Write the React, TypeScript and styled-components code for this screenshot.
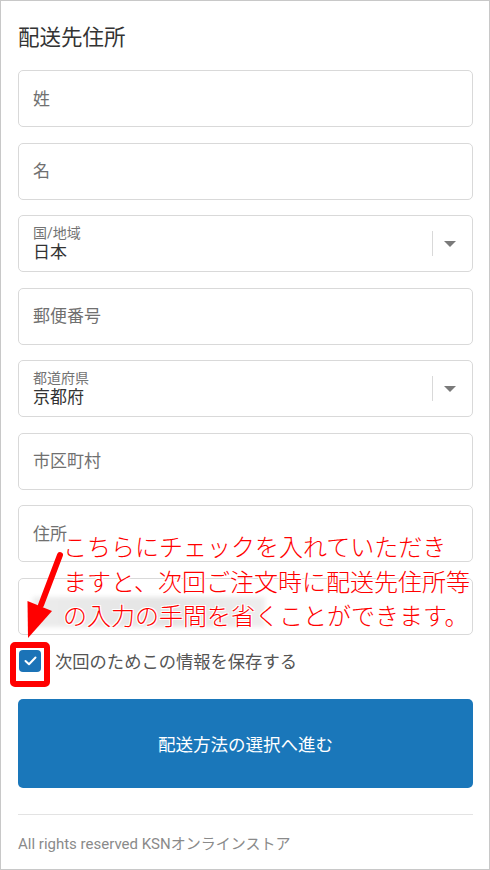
import React from "react";
import styled, { createGlobalStyle } from "styled-components";

const Global = createGlobalStyle`
  html, body { margin: 0; padding: 0; background: #fff; overflow: hidden; }
  * { box-sizing: border-box; }
  body { font-family: Roboto, "Noto Sans CJK JP", sans-serif; }
`;

const Frame = styled.div`
  position: relative;
  width: 490px;
  height: 870px;
  border: 1px solid #c8c8c8;
  padding: 23px 16px 0 17px;
  overflow: hidden;
`;

const Title = styled.h2`
  margin: 0 0 18px;
  font-size: 21.5px;
  line-height: 28px;
  font-weight: 400;
  color: #333;
`;

const Fields = styled.div`
  display: flex;
  flex-direction: column;
  gap: 15.5px;
`;

const Field = styled.div`
  position: relative;
  height: 57px;
  border: 1px solid #d9d9d9;
  border-radius: 5px;
  display: flex;
  align-items: center;
  padding: 0 14px;
  background: #fff;
`;

const Placeholder = styled.span`
  font-size: 17px;
  color: #707070;
  line-height: 20px;
`;

const SelectBody = styled.div`
  flex: 1;
  display: flex;
  flex-direction: column;
  justify-content: center;
`;

const SelectLabel = styled.span`
  font-size: 14px;
  line-height: 16px;
  color: #737373;
`;

const SelectValue = styled.span`
  font-size: 17px;
  line-height: 22px;
  color: #333;
`;

const SelectDivider = styled.span`
  width: 1px;
  height: 25px;
  background: #d9d9d9;
  margin-right: 11px;
`;

const Caret = styled.span`
  width: 0;
  height: 0;
  border-left: 6px solid transparent;
  border-right: 6px solid transparent;
  border-top: 6px solid #7a7a7a;
  margin-right: 2px;
`;

const BlurredHint = styled.div`
  width: 232px;
  height: 30px;
  margin-top: 11px;
  background: linear-gradient(90deg, #ececec, #e4e4e4 60%, #eeeeee);
  filter: blur(2px);
`;

const CheckRow = styled.label`
  display: flex;
  align-items: center;
  gap: 14px;
  margin-top: 15px;
  height: 22px;
  padding-left: 1px;
`;

const CheckBox = styled.span`
  width: 22px;
  height: 22px;
  border-radius: 4px;
  background: #1b73b7;
  display: flex;
  align-items: center;
  justify-content: center;
`;

const CheckText = styled.span`
  font-size: 17.3px;
  color: #555;
`;

const PrimaryButton = styled.button`
  display: block;
  width: 100%;
  height: 89px;
  margin-top: 27px;
  border: none;
  border-radius: 5px;
  background: #1a77ba;
  color: #fff;
  font-family: Roboto, "Noto Sans CJK JP", sans-serif;
  font-size: 17.5px;
`;

const Divider = styled.hr`
  margin: 26px 0 0;
  border: none;
  border-top: 1px solid #e3e3e3;
`;

const Footer = styled.p`
  margin: 19px 0 0;
  font-size: 15px;
  line-height: 20px;
  color: #8a8a8a;
`;

const Overlay = styled.svg`
  position: absolute;
  left: 0;
  top: 0;
  pointer-events: none;
`;

const Note = styled.div`
  position: absolute;
  left: 62px;
  top: 528px;
  font-family: "Noto Sans CJK JP", sans-serif;
  font-size: 24px;
  font-weight: 300;
  line-height: 34.5px;
  color: #ff0000;
  white-space: nowrap;
  text-shadow: 1px 1px 0 #fff, -1px -1px 0 #fff, 1px -1px 0 #fff, -1px 1px 0 #fff;
`;

export default function App() {
  return (
    <>
      <Global />
      <Frame>
        <Title>配送先住所</Title>
        <Fields>
          <Field><Placeholder>姓</Placeholder></Field>
          <Field><Placeholder>名</Placeholder></Field>
          <Field>
            <SelectBody>
              <SelectLabel>国/地域</SelectLabel>
              <SelectValue>日本</SelectValue>
            </SelectBody>
            <SelectDivider />
            <Caret />
          </Field>
          <Field><Placeholder>郵便番号</Placeholder></Field>
          <Field>
            <SelectBody>
              <SelectLabel>都道府県</SelectLabel>
              <SelectValue>京都府</SelectValue>
            </SelectBody>
            <SelectDivider />
            <Caret />
          </Field>
          <Field><Placeholder>市区町村</Placeholder></Field>
          <Field><Placeholder>住所</Placeholder></Field>
          <Field><BlurredHint /></Field>
        </Fields>
        <CheckRow>
          <CheckBox>
            <svg width="13" height="10" viewBox="0 0 13 10">
              <path d="M1.5 5 L5 8.2 L11.5 1.5" fill="none" stroke="#fff" strokeWidth="2" strokeLinecap="round" strokeLinejoin="round" />
            </svg>
          </CheckBox>
          <CheckText>次回のためこの情報を保存する</CheckText>
        </CheckRow>
        <PrimaryButton>配送方法の選択へ進む</PrimaryButton>
        <Divider />
        <Footer>All rights reserved KSNオンラインストア</Footer>

        <Note>
          こちらにチェックを入れていただき<br />
          ますと、次回ご注文時に配送先住所等<br />
          の入力の手間を省くことができます。
        </Note>
        <Overlay width="490" height="870" viewBox="0 0 490 870">
          <line x1="59" y1="554" x2="40" y2="604" stroke="#ff0000" strokeWidth="6" strokeLinecap="round" />
          <polygon points="27,637 26.5,600 51,610" fill="#ff0000" />
          <rect x="12" y="644" width="34" height="39" rx="2" fill="none" stroke="#ff0000" strokeWidth="6" />
        </Overlay>
      </Frame>
    </>
  );
}
